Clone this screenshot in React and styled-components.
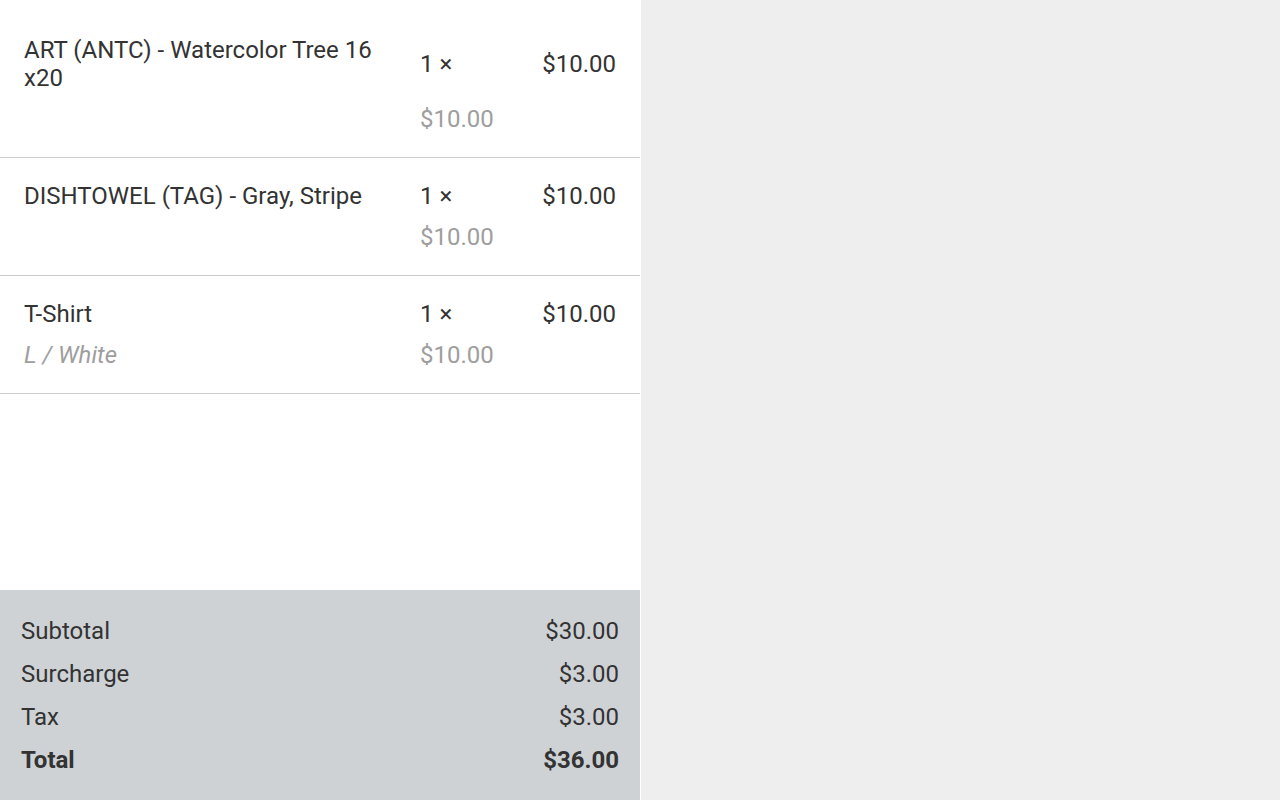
import React from "react";
import styled, { createGlobalStyle } from "styled-components";

const Global = createGlobalStyle`
  html, body { margin: 0; padding: 0; height: 100%; }
  body { background: #eeeeee; font-family: Roboto, "Noto Sans", sans-serif; color: #333333; }
  #root { height: 100%; }
  * { box-sizing: border-box; }
`;

const Page = styled.div`
  display: flex;
  height: 800px;
`;

const Panel = styled.section`
  width: 641px;
  display: flex;
  flex-direction: column;
  background: #ffffff;
  border-right: 1px solid #ffffff;
`;

const List = styled.div`
  flex: 1;
  padding-top: 12px;
`;

const Item = styled.div`
  display: grid;
  grid-template-columns: 372px 1fr auto;
  column-gap: 24px;
  row-gap: 13px;
  align-items: center;
  padding: 24px;
  border-bottom: 1px solid #cccccc;
  font-size: 24px;
  line-height: 28px;
  &:first-child { margin-top: -12px; padding-top: 36px; }
`;

const Name = styled.div`
  color: #333333;
`;

const Variant = styled.div`
  color: #9e9e9e;
  font-style: italic;
`;

const Qty = styled.div`
  color: #333333;
`;

const Price = styled.div`
  color: #333333;
  text-align: right;
`;

const Unit = styled.div`
  color: #9e9e9e;
`;

const Totals = styled.div`
  background: #ced2d5;
  padding: 27px 21px 26px;
  display: flex;
  flex-direction: column;
  gap: 15px;
`;

const TotalRow = styled.div`
  display: flex;
  justify-content: space-between;
  font-size: 24px;
  line-height: 28px;
  color: #333333;
  font-weight: ${(p) => (p.$bold ? 700 : 400)};
`;

const Side = styled.div`
  flex: 1;
  background: #eeeeee;
`;

const items = [
  { name: "ART (ANTC) - Watercolor Tree 16 x20", variant: "", qty: 1, price: "$10.00" },
  { name: "DISHTOWEL (TAG) - Gray, Stripe", variant: "", qty: 1, price: "$10.00" },
  { name: "T-Shirt", variant: "L / White", qty: 1, price: "$10.00" },
];

const totals = [
  ["Subtotal", "$30.00"],
  ["Surcharge", "$3.00"],
  ["Tax", "$3.00"],
];

export default function App() {
  return (
    <>
      <Global />
      <Page>
        <Panel>
          <List>
            {items.map((it) => (
              <Item key={it.name}>
                <Name>{it.name}</Name>
                <Qty>{it.qty} ×</Qty>
                <Price>{it.price}</Price>
                <Variant>{it.variant}</Variant>
                <Unit>{it.price}</Unit>
                <div />
              </Item>
            ))}
          </List>
          <Totals>
            {totals.map(([l, v]) => (
              <TotalRow key={l}>
                <span>{l}</span>
                <span>{v}</span>
              </TotalRow>
            ))}
            <TotalRow $bold>
              <span>Total</span>
              <span>$36.00</span>
            </TotalRow>
          </Totals>
        </Panel>
        <Side />
      </Page>
    </>
  );
}
